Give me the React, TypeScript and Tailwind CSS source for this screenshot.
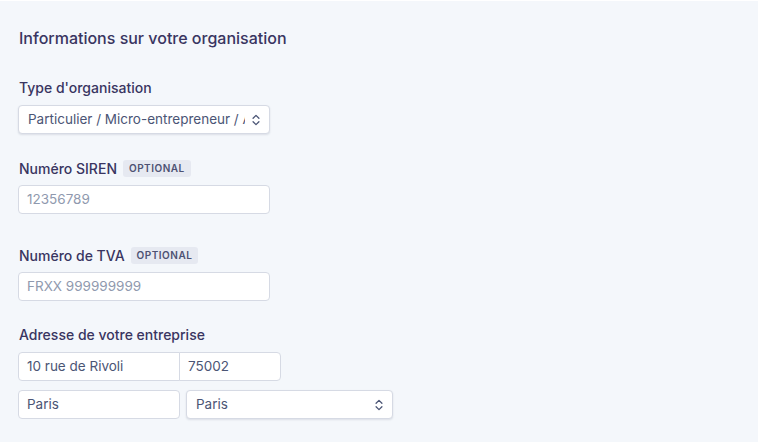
import { ChevronsUpDown } from "lucide-react";

const font = { fontFamily: "Inter, 'Noto Sans', sans-serif" };

function Badge() {
  return (
    <span className="ml-[6px] rounded-[3px] bg-[#e6e9f1] px-[6px] py-[1px] text-[10px] font-semibold tracking-[0.05em] text-[#4d5273]">
      OPTIONAL
    </span>
  );
}

function Label({ text, optional }: { text: string; optional?: boolean }) {
  return (
    <div className="flex h-5 items-center text-[14px] font-medium text-[#393561]">
      <span>{text}</span>
      {optional ? <Badge /> : null}
    </div>
  );
}

function Select({ value, className }: { value: string; className: string }) {
  return (
    <div
      className={`flex h-[29px] items-center justify-between gap-[4px] rounded-[4px] border border-[#d6dae4] bg-white pl-[9px] pr-[6px] text-[13.5px] text-[#4b5575] shadow-[0_1px_2px_rgba(40,50,80,0.12)] ${className}`}
    >
      <span className="min-w-0 flex-1 overflow-hidden whitespace-nowrap">{value}</span>
      <ChevronsUpDown className="h-[14px] w-[14px] shrink-0 text-[#4b5575]" strokeWidth={2.2} />
    </div>
  );
}

function Input({ value, placeholder, className }: { value?: string; placeholder?: string; className: string }) {
  return (
    <div
      className={`flex h-[29px] items-center border border-[#d6dae4] bg-white px-[8px] text-[13.5px] ${className}`}
    >
      {value ? (
        <span className="text-[#4b5575]">{value}</span>
      ) : (
        <span className="text-[#8f99ae]">{placeholder}</span>
      )}
    </div>
  );
}

export default function App() {
  return (
    <div className="h-[442px] w-[758px] overflow-hidden border-t border-white bg-[#f4f7fb]" style={font}>
      <div className="px-[19px] pt-[27px]">
        <h2 className="h-5 text-[16px] font-medium leading-5 text-[#393561]">
          Informations sur votre organisation
        </h2>

        <div className="mt-[29px]">
          <Label text="Type d'organisation" />
          <Select
            value="Particulier / Micro-entrepreneur / Auto-entrepreneur"
            className="mt-[8px] ml-[-1px] w-[252px]"
          />
        </div>

        <div className="mt-[24px]">
          <Label text="Numéro SIREN" optional />
          <Input placeholder="12356789" className="mt-[7px] ml-[-1px] w-[252px] rounded-[4px]" />
        </div>

        <div className="mt-[31px]">
          <Label text="Numéro de TVA" optional />
          <Input placeholder="FRXX 999999999" className="mt-[7px] ml-[-1px] w-[252px] rounded-[4px]" />
        </div>

        <div className="mt-[23px]">
          <Label text="Adresse de votre entreprise" />
          <div className="mt-[8px] ml-[-1px] flex w-[263px]">
            <Input value="10 rue de Rivoli" className="w-[162px] rounded-l-[4px]" />
            <Input value="75002" className="ml-[-1px] w-[102px] rounded-r-[4px]" />
          </div>
          <div className="mt-[9px] ml-[-1px] flex gap-[6px]">
            <Input value="Paris" className="w-[162px] rounded-[4px]" />
            <Select value="Paris" className="w-[207px]" />
          </div>
        </div>
      </div>
    </div>
  );
}
